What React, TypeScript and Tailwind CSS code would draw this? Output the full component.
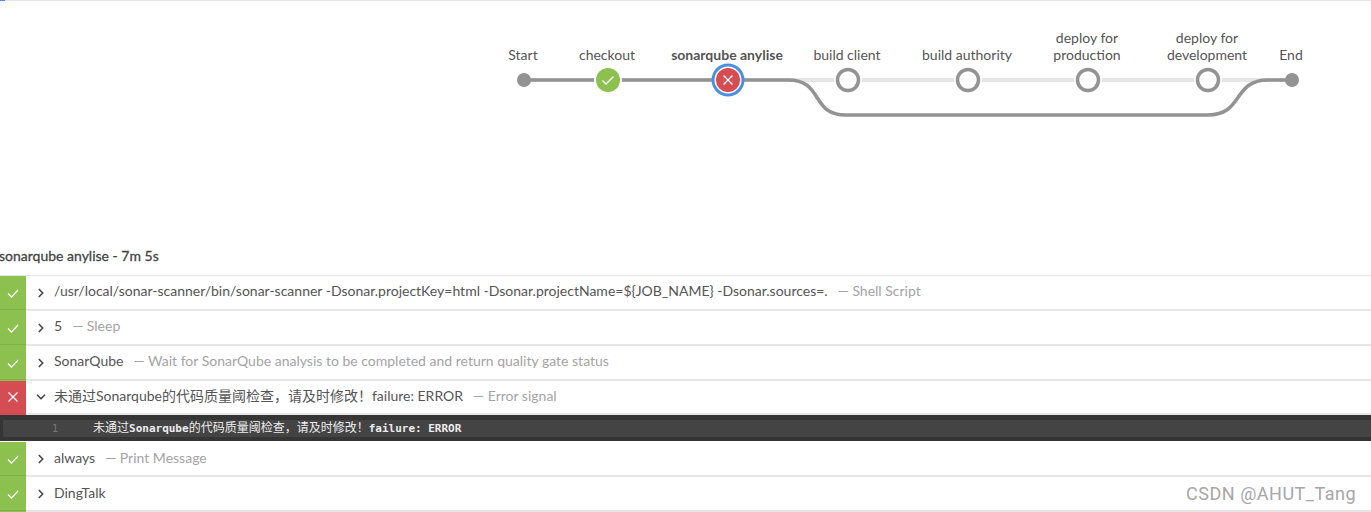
import { ChevronDown, ChevronRight } from 'lucide-react'

const font = "font-['Lato','Noto_Sans_CJK_SC',sans-serif]"

const labels = [
  { x: 523, lines: ['Start'] },
  { x: 607, lines: ['checkout'] },
  { x: 727, lines: ['sonarqube anylise'], bold: true },
  { x: 847, lines: ['build client'] },
  { x: 967, lines: ['build authority'] },
  { x: 1087, lines: ['deploy for', 'production'] },
  { x: 1207, lines: ['deploy for', 'development'] },
  { x: 1291, lines: ['End'] },
]

function Graph() {
  return (
    <div className="relative h-[240px] w-full overflow-hidden">
      <svg className="absolute left-0 top-0" width="1371" height="240" fill="none">
        <path d="M524 79H1292" stroke="#e6e6e6" strokeWidth="4" />
        <path
          d="M524 79H788C824 79 810 114 846 114H1208C1244 114 1232 79 1268 79H1292"
          stroke="#949393"
          strokeWidth="3.500"
        />
        <circle cx="524" cy="79" r="7" fill="#949393" />
        <circle cx="1292" cy="79" r="7" fill="#949393" />
        <circle cx="608" cy="79" r="14" fill="#fff" />
        <circle cx="608" cy="79" r="12" fill="#8cc04f" />
        <path d="M602.500 79.500L606 83L613.500 75.500" stroke="#fff" strokeWidth="1.400" />
        <circle cx="728" cy="79" r="16.500" fill="#4a90e2" />
        <circle cx="728" cy="79" r="13.500" fill="#fff" />
        <circle cx="728" cy="79" r="12" fill="#d54c53" />
        <path d="M723.500 74.500L732.500 83.500M732.500 74.500L723.500 83.500" stroke="#fff" strokeWidth="1.400" />
        {[848, 968, 1088, 1208].map((x) => (
          <g key={x}>
            <circle cx={x} cy="79" r="14" fill="#fff" />
            <circle cx={x} cy="79" r="10.500" fill="#fff" stroke="#949393" strokeWidth="3.500" />
          </g>
        ))}
      </svg>
      {labels.map((l) => (
        <div
          key={l.x}
          className={`absolute bottom-[178px] w-[160px] -translate-x-1/2 text-center text-[14px] leading-[17px] text-[#555555] ${l.bold ? 'font-bold' : ''}`}
          style={{ left: l.x }}
        >
          {l.lines.map((t) => (
            <div key={t}>{t}</div>
          ))}
        </div>
      ))}
    </div>
  )
}

function Status({ ok }: { ok: boolean }) {
  return (
    <div className={`flex w-[26px] shrink-0 flex-col ${ok ? 'bg-[#8cc04f]' : 'bg-[#d54c53]'}`}>
      <div className="flex flex-1 items-center justify-center">
        <svg width="12" height="12" viewBox="0 0 12 12" fill="none" stroke="#fff" strokeWidth="1.300">
          {ok ? <path d="M1 6.500L4.500 10L11 3" /> : <path d="M1.500 1.500L10.500 10.500M10.500 1.500L1.500 10.500" />}
        </svg>
      </div>
      <div className={`mb-px h-px ${ok ? 'bg-[#7fb043]' : 'bg-[#d54c53]'}`} />
    </div>
  )
}

function Step({
  ok = true,
  open = false,
  name,
  kind,
  short = false,
  lift = false,
}: {
  ok?: boolean
  open?: boolean
  name: string
  kind?: string
  short?: boolean
  lift?: boolean
}) {
  const chevron = `mr-[6px] text-[#4a4a4a] ${lift ? 'mt-[5px]' : 'mt-[3px]'}`
  return (
    <div className={`flex ${short ? 'h-[34px]' : 'h-[35px]'}`}>
      <Status ok={ok} />
      <div
        className={`flex flex-1 items-center border-b-2 border-[#e6e6e6] pl-[8px] text-[14px] text-[#555555] ${lift ? 'pb-[5px]' : 'pb-[3px]'}`}
      >
        {open ? (
          <ChevronDown size={14} strokeWidth={3} className={chevron} />
        ) : (
          <ChevronRight size={14} strokeWidth={3} className={chevron} />
        )}
        <span>{name}</span>
        {kind && <span className="ml-[10px] text-[#a4a4a4]">— {kind}</span>}
      </div>
    </div>
  )
}

function LogLine() {
  return (
    <div className="flex h-[26px] items-center bg-[#353535] pl-[3px] font-['DejaVu_Sans_Mono','Noto_Sans_CJK_SC',monospace] text-[11px] font-bold">
      <div className="flex h-[17px] w-full items-center bg-[#444444]">
        <span className="w-[90px] pl-[49px] text-[10px] font-normal text-[#777777]">1</span>
        <span className="text-[#ececec]">
          <span className="text-[12px] font-normal">未通过</span>Sonarqube
          <span className="text-[12px] font-normal">的代码质量阈检查，请及时修改！</span>failure: ERROR
        </span>
      </div>
    </div>
  )
}

export default function App() {
  return (
    <div className={`relative h-[512px] w-[1371px] overflow-hidden bg-white ${font}`}>
      <div className="flex h-px bg-[#e3e6ec]">
        <div className="w-[5px] bg-[#4a90e2]" />
      </div>
      <Graph />
      <div className="-ml-px flex h-[34px] items-start pt-[6px] text-[14px] leading-[17px] text-[#444444] [-webkit-text-stroke:0.3px_#444444]">
        sonarqube anylise - 7m 5s
      </div>
      <div className="h-px bg-[#e6e6e6]" />
      <Step
        lift
        name="/usr/local/sonar-scanner/bin/sonar-scanner -Dsonar.projectKey=html -Dsonar.projectName=${JOB_NAME} -Dsonar.sources=."
        kind="Shell Script"
      />
      <Step lift name="5" kind="Sleep" />
      <Step lift name="SonarQube" kind="Wait for SonarQube analysis to be completed and return quality gate status" />
      <Step short ok={false} open name="未通过Sonarqube的代码质量阈检查，请及时修改！failure: ERROR" kind="Error signal" />
      <LogLine />
      <div className="h-px" />
      <Step name="always" kind="Print Message" />
      <Step name="DingTalk" />
      <div className="absolute bottom-[6px] right-[15px] font-['Roboto',sans-serif] text-[18px] leading-[24px] tracking-[0.5px] text-[#a6a6a6]">
        CSDN @AHUT_Tang
      </div>
    </div>
  )
}
